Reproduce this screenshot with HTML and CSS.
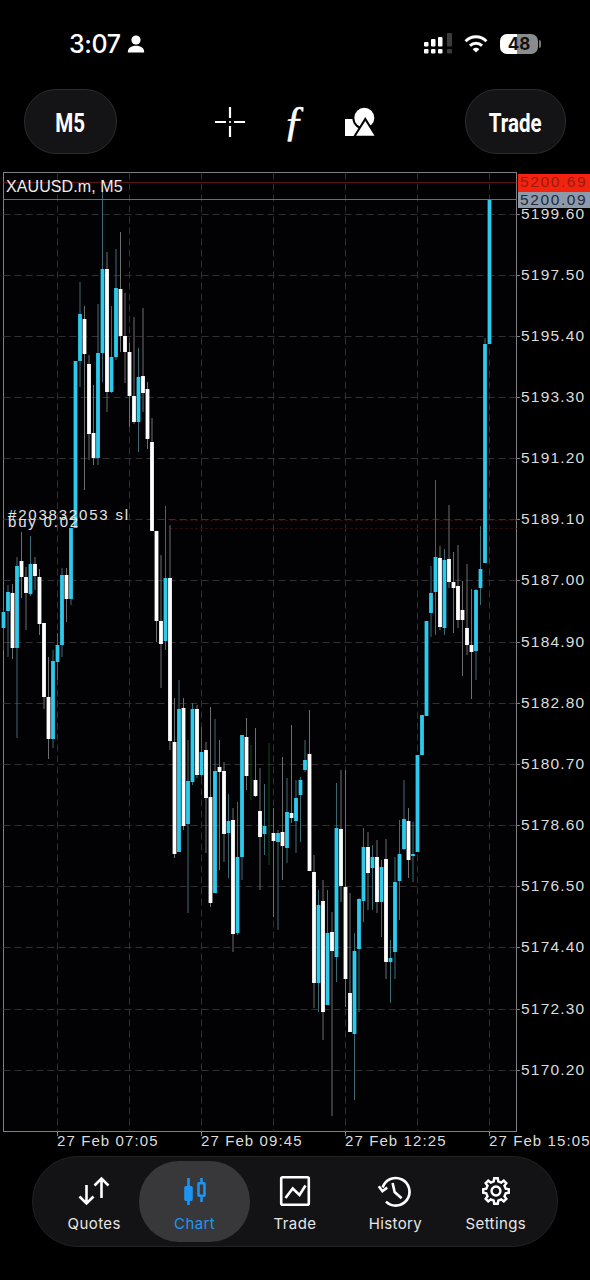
FILE: index.html
```html
<!DOCTYPE html>
<html lang="en">
<head>
  <meta charset="UTF-8" />
  <meta name="viewport" content="width=device-width, initial-scale=1.0"/>
  <title>XAUUSD.m, M5</title>
  <link rel="stylesheet" href="styles.css">
</head>
<body>
  <div class="status-bar">
    <div class="status-left">
      <span class="clock">3:07</span>
      <svg class="person" width="18" height="18" viewBox="0 0 18 18">
        <circle cx="9" cy="5" r="4.6"/>
        <path d="M0.8 17.5C0.8 13 4 10.8 9 10.8S17.2 13 17.2 17.5Z"/>
      </svg>
    </div>
    <div class="status-right">
      <svg class="signal" width="28" height="21" viewBox="0 0 28 21">
        <rect x="0" y="9" width="4.5" height="4.5" rx="1"/>
        <rect x="7" y="6" width="4.5" height="7.5" rx="1"/>
        <rect x="14" y="4" width="4.5" height="9.5" rx="1"/>
        <rect class="dim" x="23" y="0" width="5" height="13.5" rx="1"/>
        <rect x="0" y="16" width="4.5" height="4.5" rx="1"/>
        <rect x="7" y="16" width="4.5" height="4.5" rx="1"/>
        <rect x="14" y="16" width="4.5" height="4.5" rx="1"/>
        <rect class="dim" x="23" y="16" width="5" height="4.5" rx="1"/>
      </svg>
      <svg class="wifi" width="24" height="18" viewBox="0 0 24 18">
        <path class="wifi-arc" d="M1.6 6.2A14.6 14.6 0 0 1 22.4 6.2"/>
        <path class="wifi-arc" d="M6 10.8A8.5 8.5 0 0 1 18 10.8"/>
        <path d="M12 17.6L8.7 14.2A4.7 4.7 0 0 1 15.3 14.2Z"/>
      </svg>
      <div class="battery"><span>48</span></div>
    </div>
  </div>

  <div class="toolbar">
    <button class="pill pill-period" type="button"><span>M5</span></button>
    <div class="tools">
      <svg class="tool" width="32" height="32" viewBox="0 0 32 32">
        <path class="cross" d="M1 16H12M20 16H31M16 1V12M16 20V31"/>
        <circle cx="16" cy="16" r="1.1" fill="#fff"/>
      </svg>
      <span class="tool tool-f">ƒ</span>
      <svg class="tool" width="32" height="32" viewBox="0 0 32 32">
        <rect x="2" y="13" width="14" height="17" fill="#fff"/>
        <circle cx="21.3" cy="11.7" r="12" fill="#000"/>
        <circle cx="21.3" cy="11.7" r="10" fill="#fff"/>
        <path d="M22.3 11L35.3 32H9.3Z" fill="#000"/>
        <path d="M22.3 15L31.5 29.7H13Z" fill="#fff"/>
      </svg>
    </div>
    <button class="pill pill-trade" type="button"><span>Trade</span></button>
  </div>

  <div class="chart">
    <svg id="chart" width="590" height="984" viewBox="0 172 590 984"></svg>
  </div>

  <nav class="tabbar">
    <a class="tab">
      <svg class="tab-icon" width="36" height="36" viewBox="0 0 36 36">
        <path d="M10.5 12V30M3.5 23.5L10.5 30.5L17.5 23.5"/>
        <path d="M25.5 25V6M18.5 12.5L25.5 5.5L32.5 12.5"/>
      </svg>
      <span>Quotes</span>
    </a>
    <a class="tab active">
      <svg class="tab-icon" width="36" height="36" viewBox="0 0 36 36">
        <path d="M11.5 5V32M24.5 5V29"/>
        <rect class="solid" x="8.5" y="14.3" width="6" height="12.4" rx="0.5"/>
        <rect x="21.5" y="10.3" width="6" height="12.4" rx="0.5" fill="#38383a"/>
      </svg>
      <span>Chart</span>
    </a>
    <a class="tab">
      <svg class="tab-icon" width="36" height="36" viewBox="0 0 36 36">
        <rect x="4.2" y="4.2" width="27.6" height="27.6" rx="1.5"/>
        <path d="M8.5 25L15.7 15.5L22.5 22L28.5 12.5"/>
      </svg>
      <span>Trade</span>
    </a>
    <a class="tab">
      <svg class="tab-icon" width="36" height="36" viewBox="0 0 36 36">
        <path d="M5.6 14.5A13.8 13.8 0 1 1 9 28.6"/>
        <path d="M1.8 13.2L5.4 18.2L10.2 14.6"/>
        <path d="M15.6 10L17.6 19L24.6 25.2"/>
      </svg>
      <span>History</span>
    </a>
    <a class="tab">
      <svg class="tab-icon" width="36" height="36" viewBox="-19.5 -19.5 39 39">
        <polygon points="-2.43,-10.52 -1.95,-13.86 1.95,-13.86 2.43,-10.52 5.72,-9.16 8.42,-11.18 11.18,-8.42 9.16,-5.72 10.52,-2.43 13.86,-1.95 13.86,1.95 10.52,2.43 9.16,5.72 11.18,8.42 8.42,11.18 5.72,9.16 2.43,10.52 1.95,13.86 -1.95,13.86 -2.43,10.52 -5.72,9.16 -8.42,11.18 -11.18,8.42 -9.16,5.72 -10.52,2.43 -13.86,1.95 -13.86,-1.95 -10.52,-2.43 -9.16,-5.72 -11.18,-8.42 -8.42,-11.18 -5.72,-9.16"/>
        <circle cx="0" cy="0" r="4.8"/>
      </svg>
      <span>Settings</span>
    </a>
  </nav>

  <script src="chart.js"></script>
</body>
</html>
```

FILE: styles.css
```css
* {
  margin: 0;
  padding: 0;
  box-sizing: border-box;
}
body {
  background: #000;
  color: #fff;
  font-family: "Liberation Sans", Arial, sans-serif;
  width: 590px;
  height: 1280px;
  overflow: hidden;
}

/* status bar */
.status-bar {
  height: 89px;
  padding: 0 52px 1px 69px;
  display: flex;
  align-items: center;
  justify-content: space-between;
}
.status-left {
  display: flex;
  align-items: center;
  gap: 6px;
}
.clock {
  font-family: Inter, sans-serif;
  font-size: 25px;
  font-weight: 500;
  letter-spacing: -0.4px;
}
.person {
  fill: #fff;
}
.status-right {
  display: flex;
  align-items: center;
}
.signal {
  fill: #fff;
  margin-right: 12px;
  margin-bottom: 1px;
}
.signal .dim {
  fill: #3c3c3c;
}
.wifi {
  fill: #fff;
  margin-right: 12px;
}
.wifi-arc {
  fill: none;
  stroke: #fff;
  stroke-width: 3;
}
.battery {
  width: 38px;
  height: 20px;
  border-radius: 7px;
  background: linear-gradient(90deg, #fff 45%, #8c8c8c 45%);
  color: #111;
  font-family: Inter, sans-serif;
  font-size: 17px;
  font-weight: 700;
  line-height: 20px;
  text-align: center;
  position: relative;
}
.battery::after {
  content: "";
  position: absolute;
  right: -3px;
  top: 6px;
  width: 2px;
  height: 8px;
  border-radius: 0 2px 2px 0;
  background: #777;
}

/* toolbar */
.toolbar {
  height: 65px;
  margin-bottom: 18px;
  padding: 0 24px;
  display: flex;
  align-items: center;
  justify-content: space-between;
}
.pill {
  height: 65px;
  padding-top: 3px;
  border-radius: 32px;
  background: #141416;
  border: 1px solid #2c2c2e;
  color: #fff;
  font-family: Roboto, sans-serif;
  font-size: 25px;
  font-weight: 700;
}
.pill span {
  display: inline-block;
  transform: scaleX(0.82);
}
.pill-period {
  width: 93px;
}
.pill-trade {
  width: 101px;
}
.tools {
  margin-left: 6px;
  display: flex;
  align-items: center;
  gap: 32.5px;
}
.tool {
  display: block;
  width: 32px;
  height: 32px;
}
.cross {
  fill: none;
  stroke: #fff;
  stroke-width: 2.2;
}
.tool-f {
  font-family: "Liberation Serif", serif;
  font-style: italic;
  font-size: 43px;
  line-height: 30px;
  text-align: center;
  -webkit-text-stroke: 0.5px #fff;
}

/* chart, everything in it is drawn by chart.js */
.chart {
  height: 984px;
}
#chart {
  display: block;
}
.frame {
  fill: #020204;
  stroke: #808084;
  stroke-width: 1;
}
.grid {
  stroke: #303032;
  stroke-width: 1;
  stroke-dasharray: 7 4;
}
.rule {
  stroke: #6c6c70;
  stroke-width: 1;
}
.ask {
  stroke: #5e1414;
  stroke-width: 1;
}
.order-line {
  stroke: #2e0a0a;
  stroke-width: 1;
  stroke-dasharray: 3 2;
}
.tick {
  stroke: #808084;
  stroke-width: 1;
}
.label {
  fill: #dcdcdc;
  font-size: 15.5px;
  letter-spacing: 1.2px;
}
.time {
  fill: #dcdcdc;
  font-size: 15px;
  letter-spacing: 1.1px;
}
.symbol {
  fill: #eee;
  font-size: 16px;
  letter-spacing: 0.1px;
}
.tag-ask {
  fill: #f3240f;
}
.tag-bid {
  fill: #8e9aa9;
}
.tag-ask-text {
  fill: #9c1a10;
  font-size: 15.5px;
  letter-spacing: 1.6px;
}
.tag-bid-text {
  fill: #1d2b3e;
  font-size: 15.5px;
  letter-spacing: 1.6px;
}
.order-text {
  fill: #e4e4e4;
  font-size: 15px;
  letter-spacing: 1.8px;
}
.body-up {
  fill: #2ccbee;
}
.body-down {
  fill: #fff;
}
.wick-up {
  stroke: #3c6a74;
  stroke-width: 1;
}
.wick-down {
  stroke: #6e6e70;
  stroke-width: 1;
}
.wick-doji {
  stroke: #0c4a18;
  stroke-width: 1;
}

/* tab bar */
.tabbar {
  width: 526px;
  height: 91px;
  margin-left: 32px;
  padding: 0 11px;
  border-radius: 46px;
  background: #131315;
  border: 1px solid #222224;
  display: flex;
}
.tab {
  flex: 1;
  padding-top: 16px;
  display: flex;
  flex-direction: column;
  align-items: center;
  color: #e6e6e6;
  font-family: Inter, sans-serif;
  font-size: 15px;
  letter-spacing: 0.4px;
  position: relative;
}
.tab span {
  margin-top: 6px;
  line-height: 18px;
  position: relative;
}
.tab-icon {
  fill: none;
  stroke: #fff;
  stroke-width: 2.6;
  position: relative;
}
.tab.active {
  color: #2196ee;
}
.tab.active::before {
  content: "";
  position: absolute;
  left: -5px;
  right: -5px;
  top: 4px;
  height: 81px;
  border-radius: 40px;
  background: #38383a;
}
.tab.active .tab-icon {
  stroke: #1f93f0;
}
.tab.active .solid {
  fill: #1f93f0;
}
```

FILE: chart.js
```js
// page coordinates, the svg viewBox starts at y=172
const LEFT = 3.5, RIGHT = 516.5, TOP = 172.5, BOTTOM = 1131.5;

const PRICES = [
  [214, '5199.60'], [275, '5197.50'], [336, '5195.40'], [397, '5193.30'], [458, '5191.20'],
  [519, '5189.10'], [580, '5187.00'], [642, '5184.90'], [703, '5182.80'], [764, '5180.70'],
  [825, '5178.60'], [886, '5176.50'], [947, '5174.40'], [1009, '5172.30'], [1070, '5170.20']
];
const VLINES = [57.5, 129.5, 201.5, 273.5, 345.5, 417.5, 489.5];
const TIMES = [[57, '27 Feb 07:05'], [201, '27 Feb 09:45'], [345, '27 Feb 12:25'], [489, '27 Feb 15:05']];

// type (c = up, w = down, g = dark doji), body top, body bottom, wick top, wick bottom
const CANDLES = [
  ['c',612,628,610,650], ['c',592,611,585,657], ['w',593,648,584,659], ['c',566,648,557,738],
  ['w',561,577,532,598], ['w',577,593,567,630], ['c',564,594,536,596], ['w',564,576,557,590],
  ['w',577,624,569,635], ['w',623,697,623,709], ['w',697,739,657,759], ['c',661,739,650,748],
  ['c',645,662,633,680], ['c',575,645,568,657], ['w',575,599,568,622], ['c',528,599,528,605],
  ['c',361,528,361,528], ['c',314,361,282,387], ['w',319,354,306,490], ['w',364,434,355,460],
  ['w',433,458,385,465], ['c',353,458,304,465], ['c',269,353,190,382], ['w',269,392,252,412],
  ['c',357,392,306,393], ['c',288,357,249,360], ['w',289,336,232,352], ['w',336,352,293,383],
  ['w',352,396,343,427], ['w',396,422,317,424], ['c',377,422,348,452], ['w',376,393,308,412],
  ['w',389,439,382,449], ['w',442,531,418,531], ['w',531,621,531,642], ['w',621,644,555,688],
  ['c',578,641,506,650], ['w',578,741,525,750], ['w',742,854,698,858], ['c',709,852,680,852],
  ['w',708,826,698,830], ['c',781,824,740,913], ['c',709,782,703,785], ['w',709,775,705,778],
  ['c',752,775,727,777], ['w',750,798,742,853], ['w',797,903,707,907], ['c',771,893,719,893],
  ['w',767,772,740,870], ['w',771,834,762,862], ['c',821,833,794,878], ['w',820,934,808,952],
  ['c',857,933,802,935], ['c',735,857,735,880], ['w',737,776,718,790], ['g',779,780,745,800],
  ['w',780,796,728,797], ['w',811,837,768,890], ['c',826,834,784,855], ['g',800,801,743,865],
  ['w',833,841,808,917], ['c',833,842,830,930], ['w',832,846,757,880], ['c',812,848,778,863],
  ['w',813,818,725,823], ['c',798,821,780,853], ['c',780,795,777,842], ['c',760,770,740,772],
  ['w',754,871,710,871], ['w',872,983,855,1008], ['c',905,983,890,1012], ['w',901,1012,880,1040],
  ['c',933,1005,890,1005], ['w',932,951,912,1116], ['c',828,957,783,982], ['w',829,886,770,902],
  ['w',887,979,770,1007], ['w',993,1032,893,1032], ['c',951,1034,933,1100], ['c',899,949,898,1012],
  ['c',847,901,828,922], ['w',847,873,832,910], ['c',857,868,845,910], ['w',857,902,840,913],
  ['c',867,902,860,937], ['w',859,962,839,979], ['c',958,962,940,1003], ['c',882,952,857,979],
  ['c',854,881,820,920], ['c',819,849,780,850], ['w',821,860,808,878], ['c',854,856,822,882],
  ['c',755,852,755,852], ['c',715,755,715,755], ['c',621,716,621,716], ['c',593,613,566,637],
  ['c',557,592,480,635], ['w',558,627,546,630], ['c',560,628,549,635], ['w',559,582,505,588],
  ['w',582,588,552,633], ['w',586,620,545,628], ['w',610,620,581,676], ['w',628,645,564,655],
  ['w',645,652,589,699], ['c',590,651,589,680], ['c',569,588,526,605], ['c',344,563,338,563],
  ['c',199,344,199,344]
];

function line(cls, x1, y1, x2, y2) {
  return `<line class="${cls}" x1="${x1}" y1="${y1}" x2="${x2}" y2="${y2}"/>`;
}

function text(cls, x, y, value) {
  return `<text class="${cls}" x="${x}" y="${y}">${value}</text>`;
}

let out = `<rect class="frame" x="${LEFT}" y="${TOP}" width="${RIGHT - LEFT}" height="${BOTTOM - TOP}"/>`;

PRICES.forEach(([y]) => {
  out += line('grid', LEFT, y + 0.5, RIGHT, y + 0.5);
  out += line('tick', RIGHT, y + 0.5, 520, y + 0.5);
});
VLINES.forEach((x) => { out += line('grid', x, TOP, x, BOTTOM); });
TIMES.forEach(([x]) => { out += line('tick', x + 0.5, BOTTOM, x + 0.5, 1136); });

out += line('order-line', 170, 520.5, RIGHT, 520.5);
out += line('order-line', 170, 528.5, RIGHT, 528.5);

CANDLES.forEach(([type, top, bottom, wickTop, wickBottom], i) => {
  const x = 3.5 + 4.5 * i;
  const kind = type === 'c' ? 'up' : type === 'w' ? 'down' : 'doji';
  out += line('wick-' + kind, x, wickTop, x, wickBottom);
  if (type !== 'g') {
    out += `<rect class="body-${kind}" x="${x - 1.9}" y="${top}" width="3.8" height="${bottom - top}"/>`;
  }
});

out += line('ask', LEFT, 182.5, RIGHT, 182.5);
out += line('rule', LEFT, 199.5, RIGHT, 199.5);
out += text('symbol', 6, 192, 'XAUUSD.m, M5');
out += text('order-text', 8, 520, '#203832053 sl');
out += text('order-text', 8, 527, 'buy 0.02');

PRICES.forEach(([y, price]) => { out += text('label', 521, y + 5, price); });
TIMES.forEach(([x, time]) => { out += text('time', x, 1146, time); });

out += `<rect class="tag-ask" x="518" y="174" width="72" height="18"/>`;
out += `<rect class="tag-bid" x="518" y="192" width="72" height="16"/>`;
out += text('tag-ask-text', 520, 187, '5200.69');
out += text('tag-bid-text', 520, 205, '5200.09');

document.getElementById('chart').innerHTML = out;
```
